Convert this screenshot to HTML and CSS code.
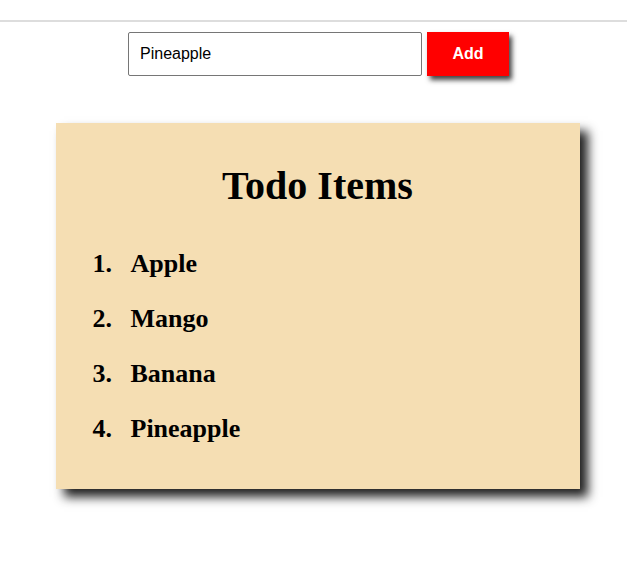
FILE: index.html
```html
<!DOCTYPE html>
<html>
<head>
<meta charset="utf-8">
<link rel="stylesheet" href="styles.css">
</head>
<body>
<div class="topbar"></div>
<div class="page">
  <form class="add-form">
    <input class="todo-input" type="text" value="Pineapple">
    <button class="add-btn" type="button">Add</button>
  </form>
  <div class="card">
    <h1 class="card-title">Todo Items</h1>
    <ol class="todo-list">
      <li>Apple</li>
      <li>Mango</li>
      <li>Banana</li>
      <li>Pineapple</li>
    </ol>
  </div>
</div>
</body>
</html>
```
FILE: styles.css
```css
html, body {
  margin: 0;
  padding: 0;
  background: #fff;
}
body {
  font-family: "Liberation Serif", "Times New Roman", serif;
}
.topbar {
  height: 20px;
  border-bottom: 2px solid #dddddd;
}
.page {
  display: flex;
  flex-direction: column;
  align-items: center;
  padding: 0 0 70px 8px;
}
.add-form {
  display: flex;
  gap: 5px;
  margin: 10px 0 0 2px;
}
.todo-input {
  box-sizing: border-box;
  width: 294px;
  height: 44px;
  border: 1px solid #767676;
  border-radius: 2px;
  padding: 0 11px;
  font-family: "Liberation Sans", Arial, sans-serif;
  font-size: 16px;
  color: #000;
  margin: 0;
}
.add-btn {
  box-sizing: border-box;
  width: 82px;
  height: 44px;
  border: none;
  background: #ff0000;
  color: #fff;
  font-family: "Liberation Sans", Arial, sans-serif;
  font-weight: bold;
  font-size: 16px;
  box-shadow: 3px 4px 5px #444;
  margin: 0;
}
.card {
  box-sizing: border-box;
  width: 524px;
  margin-top: 47px;
  background: #f5deb3;
  box-shadow: 8px 8px 10px #222;
  padding: 40px 0 45px 0;
}
.card-title {
  margin: 0;
  text-align: center;
  font-size: 40px;
  line-height: 46px;
  font-weight: bold;
}
.todo-list {
  margin: 40px 0 0 0;
  padding-left: 63px;
}
.todo-list li {
  font-size: 26px;
  line-height: 30px;
  font-weight: bold;
  padding-left: 12px;
  margin-bottom: 25px;
}
.todo-list li:last-child {
  margin-bottom: 0;
}
```
